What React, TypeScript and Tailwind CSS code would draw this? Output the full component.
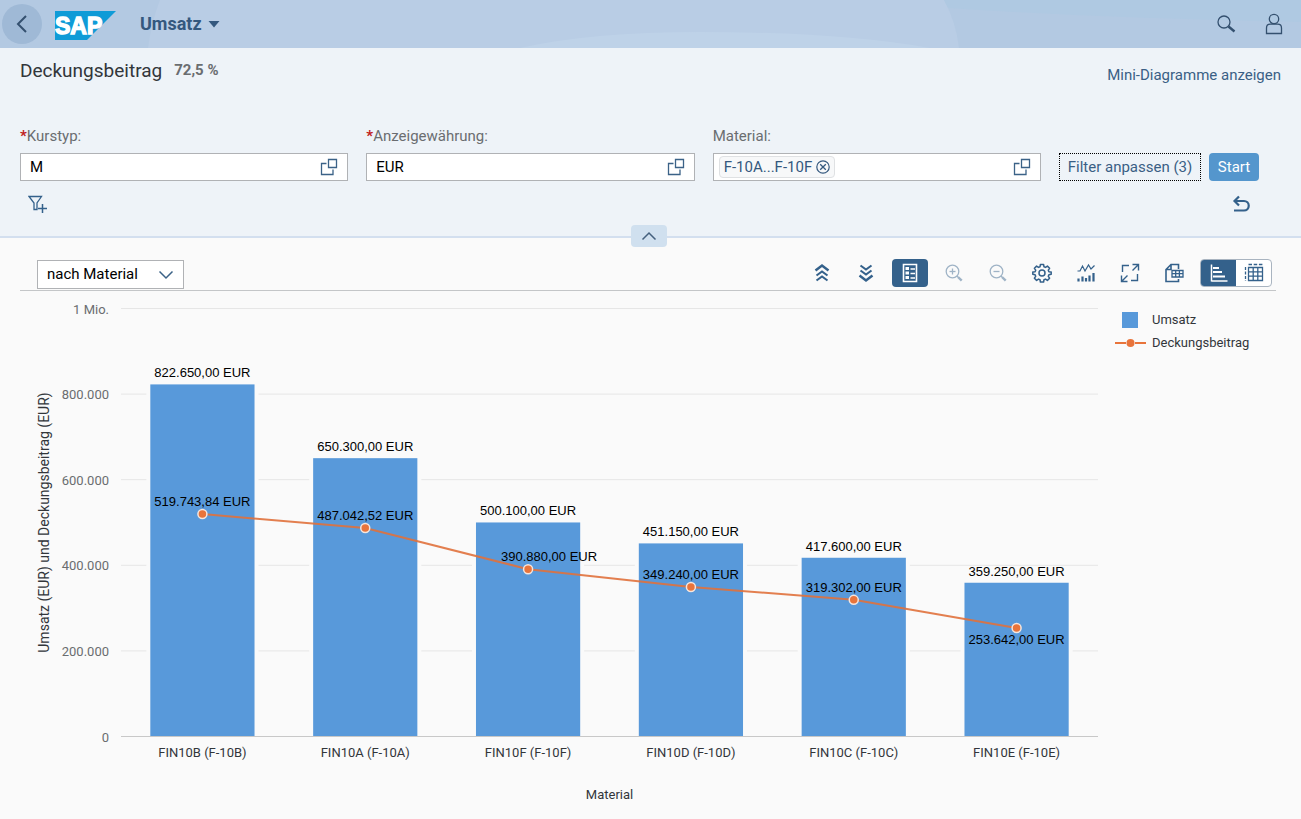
import { useLayoutEffect, useRef, useState, type ReactNode } from 'react';

type Entry = {
  name: string;
  revenue: number;
  margin: number;
  labelDx?: number;
  labelBelow?: boolean;
};

const entries: Entry[] = [
  { name: 'FIN10B (F-10B)', revenue: 822650, margin: 519743.84 },
  { name: 'FIN10A (F-10A)', revenue: 650300, margin: 487042.52 },
  { name: 'FIN10F (F-10F)', revenue: 500100, margin: 390880, labelDx: 21 },
  { name: 'FIN10D (F-10D)', revenue: 451150, margin: 349240 },
  { name: 'FIN10C (F-10C)', revenue: 417600, margin: 319302 },
  { name: 'FIN10E (F-10E)', revenue: 359250, margin: 253642, labelBelow: true },
];

const ticks = [
  { value: 0, label: '0' },
  { value: 200000, label: '200.000' },
  { value: 400000, label: '400.000' },
  { value: 600000, label: '600.000' },
  { value: 800000, label: '800.000' },
  { value: 1000000, label: '1 Mio.' },
];

const euro = (n: number) => {
  const [whole, cents] = n.toFixed(2).split('.');
  return `${whole.replace(/\B(?=(\d{3})+$)/g, '.')},${cents} EUR`;
};

function Icon({ size = 20, children }: { size?: number; children: ReactNode }) {
  return (
    <svg
      width={size}
      height={size}
      viewBox={`0 0 ${size} ${size}`}
      fill="none"
      stroke="currentColor"
      strokeWidth="1.3"
      aria-hidden="true"
    >
      {children}
    </svg>
  );
}

const ValueHelpIcon = () => (
  <Icon size={18}>
    <path d="M8.5 1.5h8v8h-8z" />
    <path d="M6.5 5.5h-5v11h11.500v-5" />
  </Icon>
);

const ChevronUp = () => (
  <svg width="16" height="10" viewBox="0 0 16 10" fill="none" stroke="currentColor" strokeWidth="1.5" aria-hidden="true">
    <path d="M1.5 8.5 8 2l6.5 6.5" />
  </svg>
);

const CollapseAllIcon = () => (
  <Icon>
    <path d="M3.5 7.5 10 2.5l6.5 5" strokeWidth="2.5" />
    <path d="M4.500 12.500l5.500-4 5.500 4M4.500 17.500l5.500-4 5.500 4" strokeWidth="2.100" />
  </Icon>
);

const ExpandAllIcon = () => (
  <Icon>
    <path d="M4.500 2.500l5.500 4 5.500-4M4.500 7.500l5.500 4 5.500-4" strokeWidth="2.100" />
    <path d="M3.500 12.500l6.500 5 6.500-5" strokeWidth="2.500" />
  </Icon>
);

const LegendIcon = () => (
  <Icon>
    <path d="M3.5 1.5h13v17h-13z" strokeWidth="1.6" />
    <path d="M5.5 4h3.5v3H5.5zM5.5 8.5h3.5v3H5.5zM5.5 13h3.5v3H5.5z" fill="currentColor" stroke="none" />
    <path d="M10.5 6H15M10.5 10.500H15M10.5 15H15" strokeWidth="1.6" />
  </Icon>
);

const ZoomIcon = ({ plus }: { plus?: boolean }) => (
  <Icon>
    <circle cx="8.5" cy="8.5" r="6.3" />
    <path d="M5.5 8.5h6" />
    {plus && <path d="M8.5 5.5v6" />}
    <path d="M13 13l1 1" />
    <path d="M14 14l3.7 3.7" strokeWidth="2.4" />
  </Icon>
);

const GearIcon = () => (
  <Icon>
    <path
      strokeWidth="1.5"
      strokeLinejoin="round"
      d="M8.4 1.5h3.2l.4 2.3 1.5.6 1.9-1.3 2.2 2.2-1.3 1.9.6 1.5 2.3.4v2.2l-2.3.5-.6 1.5 1.3 1.9-2.2 2.2-1.9-1.3-1.5.6-.4 2.3H8.4L8 16.7l-1.5-.6-1.9 1.3-2.2-2.2 1.3-1.9-.6-1.5-2.3-.5V9.1l2.3-.4.6-1.5L2.4 5.3l2.2-2.2 1.9 1.3L8 3.8z"
    />
    <circle cx="10" cy="10" r="3" strokeWidth="1.5" />
  </Icon>
);

const ChartTypeIcon = () => (
  <Icon>
    <path d="M1.5 8H4l2.500-5L9 8l3.500-6L15 6l3.500-3.500" strokeWidth="1.2" />
    <path d="M2.500 15.500v3M6.500 13.500v5M10 15v3.500M13.500 12.500v6M17.500 10v8.500" strokeWidth="2.2" />
  </Icon>
);

const FullScreenIcon = () => (
  <Icon>
    <path d="M9 2.5H2.5V9M11 17.5h6.5V11" strokeWidth="1.4" />
    <path d="M12.5 1.5h6v6M18.5 1.5l-6 6M7.5 18.5h-6v-6M1.5 18.5l6-6" strokeWidth="1.4" />
  </Icon>
);

const ExportIcon = () => (
  <Icon>
    <path d="M14.5 6V1.500H7L2 6.500v12h12.500V16M7 1.500v5H2" strokeWidth="1.6" />
    <path d="M8 7.500h11v6.500H8zM8 10.700h11M11.700 7.500V14M15.400 7.500V14" strokeWidth="1.3" />
  </Icon>
);

const BarChartIcon = () => (
  <Icon>
    <path d="M2.500 1.500v17M2.500 18h16" strokeWidth="1.5" />
    <path d="M4 5h6M4 9h9M4 13.500h12" strokeWidth="2.2" />
  </Icon>
);

const TableIcon = () => (
  <Icon>
    <path d="M4.500 4.500h14v13h-14zM9.200 4.500v13M13.800 4.500v13M4.500 8.800h14M4.500 13.200h14" />
    <path d="M1.500 4v14" strokeDasharray="3 1.5" />
    <path d="M4.500 1.500h14" strokeDasharray="3.5 1.7" />
  </Icon>
);

function SapLogo() {
  return (
    <svg width="61" height="29" viewBox="0 0 61 29" role="img" aria-label="SAP">
      <path d="M0 0h61L32 29H0z" fill="#0f9bd7" />
      <text
        x="0"
        y="23"
        fill="#fff"
        stroke="#fff"
        strokeWidth="1.4"
        className="font-['Liberation_Sans',sans-serif] text-[23px] font-bold"
      >
        SAP
      </text>
    </svg>
  );
}

function ShellBar() {
  return (
    <header className="relative flex h-12 items-center bg-[#b3c9e2] pr-[17px] pl-0.5 text-[#34506f]">
      <svg className="absolute inset-0 h-full w-full" viewBox="0 0 1301 48" preserveAspectRatio="none" aria-hidden="true">
        <path d="M160 0H944Q956 22 959 48H148Q152 20 160 0z" fill="#b9cde5" />
        <path d="M520 48Q590 32 700 32Q840 32 930 48z" fill="#bed2e8" />
        <path d="M944 0H1301V22Q1100 18 948 8z" fill="#afc9e2" />
      </svg>
      <button aria-label="Zurück" className="relative grid size-10 place-items-center rounded-full bg-[#9fb9d6]">
        <svg width="12" height="20" viewBox="0 0 12 20" fill="none" stroke="currentColor" strokeWidth="2" aria-hidden="true">
          <path d="M10 2 2 10l8 8" />
        </svg>
      </button>
      <a href="#home" className="relative ml-[13px] pt-0.5">
        <SapLogo />
      </a>
      <button className="relative ml-6 flex items-center gap-1.5 text-lg font-bold text-[#34587e]">
        Umsatz
        <svg width="12" height="7" viewBox="0 0 12 7" fill="currentColor" aria-hidden="true">
          <path d="M.5 0h11L6 6.500z" />
        </svg>
      </button>
      <div className="relative ml-auto flex items-center gap-7">
        <button aria-label="Suchen">
          <Icon>
            <circle cx="8" cy="8" r="6" />
            <path d="M12.500 12.500l6 5" strokeWidth="2.4" />
          </Icon>
        </button>
        <button aria-label="Profil">
          <svg width="20" height="22" viewBox="0 0 20 22" fill="none" stroke="currentColor" strokeWidth="1.3" aria-hidden="true">
            <circle cx="10" cy="6" r="4.7" />
            <path d="M2.500 20.500V15q0-3.800 3.800-3.800h7.400q3.800 0 3.800 3.800v5.500z" />
          </svg>
        </button>
      </div>
    </header>
  );
}

function Field({ id, label, required, value, token }: { id: string; label: string; required?: boolean; value?: string; token?: string }) {
  return (
    <div className="min-w-0 flex-1">
      <label htmlFor={id} className="block h-[27px] leading-5 text-[#6a6d70]">
        {required && <span className="font-bold text-[#c02020]">*</span>}
        {label}
      </label>
      <div className="flex h-7 items-center border border-[#b0b2b5] bg-white pr-[9px]">
        {token && (
          <span className="ml-[5px] flex h-[22px] shrink-0 items-center gap-1 rounded-sm border border-[#dfe1e3] bg-[#f7f8f9] px-1 text-[#34587e]">
            {token}
            <button aria-label="Entfernen">
              <Icon size={14}>
                <circle cx="7" cy="7" r="6.2" strokeWidth="1.2" />
                <path d="M4.200 4.200l5.600 5.600M9.800 4.200l-5.600 5.600" />
              </Icon>
            </button>
          </span>
        )}
        <input id={id} defaultValue={value} className="w-0 min-w-0 flex-1 bg-transparent px-[9px] text-black outline-none" />
        <button aria-label={`${label} Wertehilfe`} className="text-[#3b6287]">
          <ValueHelpIcon />
        </button>
      </div>
    </div>
  );
}

function FilterPanel() {
  return (
    <section className="relative border-b-2 border-[#d3dfef] bg-[#eef3f8] pt-2.5 pr-[42px] pb-[21px] pl-5">
      <div className="-mr-[22px] flex h-[68px] items-start">
        <h1 className="text-[19px] leading-[26px] text-[#32363a]">Deckungsbeitrag</h1>
        <span className="ml-3 font-bold leading-6 text-[#6a6d70]">72,5 %</span>
        <a href="#mini" className="mt-1.5 ml-auto leading-[22px] text-[#3a5f85]">
          Mini-Diagramme anzeigen
        </a>
      </div>
      <div className="flex items-end gap-[18px]">
        <Field id="rate" label="Kurstyp:" required value="M" />
        <Field id="currency" label="Anzeigewährung:" required value="EUR" />
        <Field id="material" label="Material:" token="F-10A...F-10F" />
        <div className="flex items-center gap-2">
          <button className="h-7 w-[142px] border border-dotted border-black text-[#3a5f85]">Filter anpassen (3)</button>
          <button className="h-7 w-[50px] rounded bg-[#5496cd] text-white">Start</button>
        </div>
      </div>
      <div className="mt-3 flex items-center justify-between pr-[9px] pl-2 text-[#34618b]">
        <button aria-label="Filter hinzufügen">
          <Icon size={22}>
            <path d="M1 3.500h12.500L9 10v6.500H6V10z" />
            <path d="M14.500 11v9M10 15.500h9" strokeWidth="1.5" />
          </Icon>
        </button>
        <button aria-label="Zurücksetzen">
          <Icon size={18}>
            <path d="M7 1.500 2.500 6 7 10.500M2.500 6H12a4.500 4.500 0 0 1 0 9.500H2" strokeWidth="2.2" />
          </Icon>
        </button>
      </div>
      <button
        aria-label="Kopfbereich einklappen"
        className="absolute -bottom-[11px] left-1/2 z-10 -ml-5 grid h-[22px] w-9 place-items-center rounded-sm bg-[#d0e0ef] text-[#44607e]"
      >
        <ChevronUp />
      </button>
    </section>
  );
}

const tools: { label: string; icon: ReactNode; active?: boolean; disabled?: boolean }[] = [
  { label: 'Drill-up', icon: <CollapseAllIcon /> },
  { label: 'Drilldown', icon: <ExpandAllIcon /> },
  { label: 'Legende', icon: <LegendIcon />, active: true },
  { label: 'Vergrößern', icon: <ZoomIcon plus />, disabled: true },
  { label: 'Verkleinern', icon: <ZoomIcon />, disabled: true },
  { label: 'Einstellungen', icon: <GearIcon /> },
  { label: 'Diagrammtyp', icon: <ChartTypeIcon /> },
  { label: 'Vollbild', icon: <FullScreenIcon /> },
  { label: 'Exportieren', icon: <ExportIcon /> },
];

function Toolbar() {
  return (
    <div className="flex h-[53px] items-start justify-between border-b border-[#c4c6c8] pr-1 pl-[17px]">
      <div className="relative mt-[22px] flex h-[29px] w-[147px]">
        <select aria-label="Ansicht" className="w-full appearance-none border border-[#b0b2b5] bg-white pl-[9px] text-black outline-none">
          <option>nach Material</option>
        </select>
        <svg
          className="pointer-events-none absolute top-2.5 right-2.5 text-[#3b6287]"
          width="16"
          height="10"
          viewBox="0 0 16 10"
          fill="none"
          stroke="currentColor"
          strokeWidth="1.5"
          aria-hidden="true"
        >
          <path d="M1.500 1.500 8 8l6.500-6.500" />
        </svg>
      </div>
      <div className="mt-[21px] flex gap-2 text-[#34618b]">
        {tools.map((t) => (
          <button
            key={t.label}
            aria-label={t.label}
            disabled={t.disabled}
            className={
              t.active
                ? 'grid h-7 w-9 place-items-center rounded bg-[#34618b] text-white'
                : 'grid h-7 w-9 place-items-center disabled:text-[#9fb3c6]'
            }
          >
            {t.icon}
          </button>
        ))}
        <div className="flex h-7 w-[72px] overflow-hidden rounded border border-[#a9b4c0] bg-white">
          <button aria-label="Diagramm" className="grid flex-1 place-items-center bg-[#34618b] text-white">
            <BarChartIcon />
          </button>
          <button aria-label="Tabelle" className="grid flex-1 place-items-center">
            <TableIcon />
          </button>
        </div>
      </div>
    </div>
  );
}

function Chart() {
  const box = useRef<HTMLDivElement>(null);
  const [width, setWidth] = useState(1087);

  useLayoutEffect(() => {
    const el = box.current;
    if (!el) return;
    const update = () => setWidth(el.clientWidth);
    update();
    const observer = new ResizeObserver(update);
    observer.observe(el);
    return () => observer.disconnect();
  }, []);

  const left = 101;
  const right = width - 9;
  const top = 17.5;
  const bottom = 445.5;
  const step = (right - left) / entries.length;
  const barWidth = step * 0.64;
  const y = (v: number) => bottom - (v / 1000000) * (bottom - top);
  const x = (i: number) => left + step * (i + 0.5);

  return (
    <div ref={box} className="min-w-0 flex-1">
      <svg width={width} height="520" className="block text-[13px]" role="img" aria-label="Umsatz und Deckungsbeitrag nach Material">
        {ticks.map((t) => (
          <g key={t.value}>
            <line x1={left} x2={right} y1={y(t.value)} y2={y(t.value)} stroke="#e6e6e6" />
            <text x={left - 12} y={y(t.value) + 5} textAnchor="end" fill="#6a6d70">
              {t.label}
            </text>
          </g>
        ))}
        {entries.map((e, i) => (
          <g key={e.name}>
            <rect x={x(i) - barWidth / 2 - 4} y={y(e.revenue) - 2} width={barWidth + 8} height={bottom - y(e.revenue) + 2} fill="#fafafa" />
            <rect x={x(i) - barWidth / 2} y={y(e.revenue)} width={barWidth} height={bottom - y(e.revenue)} fill="#5899da" />
          </g>
        ))}
        <line x1={left} x2={right} y1={bottom} y2={bottom} stroke="#c8c8c8" />
        <polyline points={entries.map((e, i) => `${x(i)},${y(e.margin)}`).join(' ')} fill="none" stroke="#e0713c" strokeWidth="2" strokeOpacity="0.9" />
        {entries.map((e, i) => (
          <g key={e.name} textAnchor="middle" fill="#000">
            <circle cx={x(i)} cy={y(e.margin)} r="4.5" fill="#e8743b" stroke="#f5e6de" strokeWidth="1.5" />
            <g className="font-['Liberation_Sans',sans-serif]">
              <text x={x(i)} y={y(e.revenue) - 7}>
                {euro(e.revenue)}
              </text>
              <text x={x(i) + (e.labelDx ?? 0)} y={y(e.margin) + (e.labelBelow ? 16 : -8)}>
                {euro(e.margin)}
              </text>
            </g>
            <text x={x(i)} y={bottom + 20} fill="#32363a">
              {e.name}
            </text>
          </g>
        ))}
        <text x={(left + right) / 2} y={bottom + 62} textAnchor="middle" fill="#32363a">
          Material
        </text>
        <text transform={`translate(29 ${(top + bottom) / 2}) rotate(-90)`} textAnchor="middle" fill="#32363a" className="text-sm">
          Umsatz (EUR) und Deckungsbeitrag (EUR)
        </text>
      </svg>
    </div>
  );
}

function Legend() {
  return (
    <ul className="w-[169px] shrink-0 pt-[17px] pl-2 text-[13px] leading-[23px] text-[#32363a]">
      <li className="flex items-center gap-1.5">
        <svg width="31" height="16" aria-hidden="true">
          <rect x="7" width="16" height="16" fill="#5899da" />
        </svg>
        Umsatz
      </li>
      <li className="flex items-center gap-1.5">
        <svg width="31" height="10" aria-hidden="true">
          <path d="M0 5h11M20 5h11" stroke="#e8743b" strokeWidth="2" />
          <circle cx="15.500" cy="5" r="4" fill="#e8743b" />
        </svg>
        Deckungsbeitrag
      </li>
    </ul>
  );
}

export default function App() {
  return (
    <div className="min-h-screen bg-[#fafafa] font-['Roboto','Liberation_Sans',sans-serif] text-[15px]">
      <ShellBar />
      <FilterPanel />
      <main className="pr-[25px] pl-5">
        <Toolbar />
        <div className="flex">
          <Chart />
          <Legend />
        </div>
      </main>
    </div>
  );
}
